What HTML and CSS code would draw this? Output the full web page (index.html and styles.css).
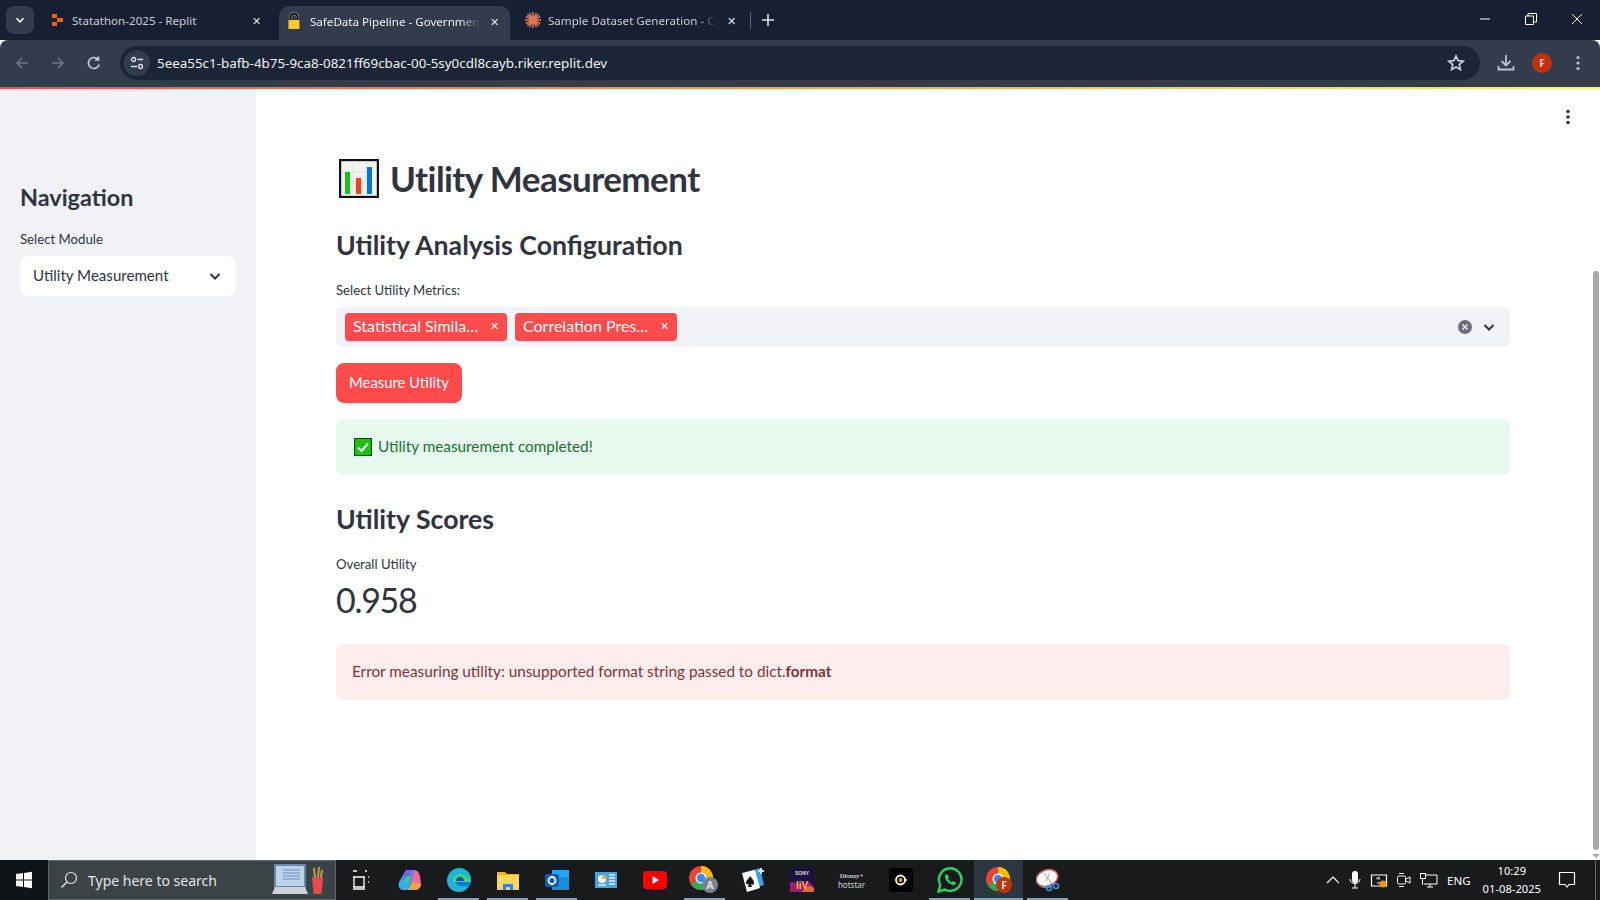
FILE: index.html
```html
<!DOCTYPE html>
<html lang="en">
<head>
<meta charset="utf-8">
<title>SafeData Pipeline</title>
<link rel="stylesheet" href="styles.css">
</head>
<body>
<div class="screen">
  <header class="tabstrip">
    <button class="tab-search"><svg width="12" height="12" viewBox="0 0 12 12"><path d="M2.5 4.2 6 7.8l3.5-3.6" fill="none" stroke="#fff" stroke-width="1.6"/></svg></button>
    <div class="tab first">
      <svg class="fav" width="14" height="14" viewBox="0 0 14 14"><path d="M1 1h5v4H1zM6 5h6v4H6zM1 9h5v4H1z" fill="#f26207"/></svg>
      <span class="tab-title">Statathon-2025 - Replit</span>
      <span class="tab-x">✕</span>
    </div>
    <div class="tab active">
      <svg class="fav" width="14" height="18" viewBox="0 0 14 18"><path d="M3.500 8V5a3.500 3.500 0 0 1 7 0v3" fill="none" stroke="#aab" stroke-width="2.800"/><path d="M3.500 8V5a3.500 3.500 0 0 1 7 0v3" fill="none" stroke="#000" stroke-width="1.800"/><rect x="1" y="7.500" width="12" height="10" rx="1" fill="#fcc934" stroke="#222" stroke-width=".8"/></svg>
      <span class="tab-title fade">SafeData Pipeline - Government</span>
      <span class="tab-x">✕</span>
    </div>
    <div class="tab third">
      <svg class="fav" width="16" height="16" viewBox="0 0 16 16"><g stroke="#d97757" stroke-width="1.5"><path d="M8 0v16M0 8h16M2.3 2.3l11.4 11.4M13.7 2.3 2.3 13.7M4.5 .8l7 14.4M11.5 .8l-7 14.4M.8 4.5l14.4 7M15.2 4.5.8 11.5"/></g></svg>
      <span class="tab-title fade">Sample Dataset Generation - Cl</span>
      <span class="tab-x">✕</span>
    </div>
    <span class="tab-sep"></span>
    <svg class="newtab" width="12" height="12" viewBox="0 0 12 12"><path d="M6 0v12M0 6h12" stroke="#dfe3ea" stroke-width="1.6"/></svg>
    <div class="winbtns">
      <svg width="12" height="12" viewBox="0 0 12 12"><path d="M1 6h10" stroke="#fff"/></svg>
      <svg width="12" height="12" viewBox="0 0 12 12"><path d="M.5 3h8v8.500h-8zM3 3V.5h8.500V9H8.500" fill="none" stroke="#fff"/></svg>
      <svg width="12" height="12" viewBox="0 0 12 12"><path d="M1 1l10 10M11 1 1 11" stroke="#fff"/></svg>
    </div>
  </header>

  <nav class="toolbar">
    <svg class="navicon" width="16" height="16" viewBox="0 0 16 16"><path d="M14 8H3M8 3 3 8l5 5" fill="none" stroke="#6e7787" stroke-width="1.6"/></svg>
    <svg class="navicon" width="16" height="16" viewBox="0 0 16 16"><path d="M2 8h11M8 3l5 5-5 5" fill="none" stroke="#6e7787" stroke-width="1.6"/></svg>
    <svg class="navicon" width="16" height="16" viewBox="0 0 16 16"><path d="M13.200 9.500A5.500 5.500 0 1 1 12 4.300M12.500 1.500v3.500H9" fill="none" stroke="#c8ced8" stroke-width="1.6"/></svg>
    <div class="omnibox">
      <span class="site-btn"><svg width="14" height="14" viewBox="0 0 14 14"><g fill="none" stroke="#dfe3ea" stroke-width="1.300"><circle cx="3.500" cy="3.500" r="2"/><path d="M7.500 3.500H13M1 10.500h6"/><circle cx="10.500" cy="10.500" r="2"/></g></svg></span>
      <span class="url">5eea55c1-bafb-4b75-9ca8-0821ff69cbac-00-5sy0cdl8cayb.riker.replit.dev</span>
      <svg width="18" height="18" viewBox="0 0 18 18"><path d="m9 2 2.100 4.700 5 .5-3.800 3.300 1.100 5L9 13l-4.400 2.500 1.100-5L1.900 7.200l5-.5z" fill="none" stroke="#c8ced8" stroke-width="1.700"/></svg>
    </div>
    <div class="toolicons">
      <svg width="18" height="18" viewBox="0 0 18 18"><path d="M9 1v10M4.500 7 9 11.500 13.500 7M1.500 12v3.500h15V12" fill="none" stroke="#b9c3d6" stroke-width="1.800"/></svg>
      <span class="avatar">F</span>
      <svg width="18" height="18" viewBox="0 0 18 18"><g fill="#b9c3d6"><circle cx="9" cy="3.500" r="1.600"/><circle cx="9" cy="9" r="1.600"/><circle cx="9" cy="14.500" r="1.600"/></g></svg>
    </div>
  </nav>
  <div class="loadbar"></div>

  <div class="app">
    <aside class="sidebar">
      <h2 class="side-title">Navigation</h2>
      <div class="field-label">Select Module</div>
      <div class="select">
        <span class="lift">Utility Measurement</span>
        <svg width="14" height="14" viewBox="0 0 14 14"><path d="m2.500 5 4.500 4.500L11.500 5" fill="none" stroke="#31333f" stroke-width="2"/></svg>
      </div>
    </aside>

    <main class="main">
      <svg class="page-menu" width="6" height="16" viewBox="0 0 6 16"><g fill="#31333f"><circle cx="3" cy="2.500" r="1.800"/><circle cx="3" cy="8" r="1.800"/><circle cx="3" cy="13.500" r="1.800"/></g></svg>
      <h1 class="title">
        <svg class="chart-emoji" width="40" height="39" viewBox="0 0 40 39"><rect x="1" y="1" width="38" height="37" fill="#f3f3f3" stroke="#111" stroke-width="2.400"/><path d="M2 13h36M2 25h36M14 2v35M27 2v35" stroke="#e2e2e2"/><rect x="6" y="13" width="5" height="22" fill="#16c60c"/><rect x="17" y="19" width="5" height="16" fill="#f7410f"/><rect x="28" y="8" width="5" height="27" fill="#0078d7"/></svg>
        <span>Utility Measurement</span>
      </h1>
      <h2 class="section first-section">Utility Analysis Configuration</h2>
      <div class="field-label">Select Utility Metrics:</div>
      <div class="multiselect">
        <span class="tag"><span class="tag-text">Statistical Simila…</span><span class="tag-x">✕</span></span>
        <span class="tag"><span class="tag-text">Correlation Pres…</span><span class="tag-x">✕</span></span>
        <span class="ms-spacer"></span>
        <svg width="14" height="14" viewBox="0 0 14 14"><circle cx="7" cy="7" r="7" fill="#6b6f7c"/><path d="m4.500 4.500 5 5m0-5-5 5" stroke="#f0f2f6" stroke-width="1.400"/></svg>
        <svg class="ms-chevron" width="14" height="14" viewBox="0 0 14 14"><path d="m2.500 5 4.500 4.500L11.500 5" fill="none" stroke="#31333f" stroke-width="2"/></svg>
      </div>
      <button class="primary">Measure Utility</button>
      <div class="alert success">
        <svg class="check-emoji" width="18" height="18" viewBox="0 0 18 18"><rect x=".5" y=".5" width="17" height="17" fill="#16c60c" stroke="#1a3a1a"/><path d="m4 9.500 3.500 3.500L14 5.500" fill="none" stroke="#fff" stroke-width="2"/></svg>
        <span class="lift">Utility measurement completed!</span>
      </div>
      <h2 class="section">Utility Scores</h2>
      <div class="field-label metric-label">Overall Utility</div>
      <div class="metric-value">0.958</div>
      <div class="alert error"><span class="lift">Error measuring utility: unsupported format string passed to dict.<strong>format</strong></span></div>
    </main>

    <div class="scrollbar">
      <span class="sb-thumb"></span>
      <span class="sb-arrow"></span>
    </div>
  </div>

  <footer class="taskbar">
    <span class="tb-start"><svg width="18" height="18" viewBox="0 0 18 18"><path d="M1 3l7-1v6.500H1zM9 1.900 17 .8v7.700H9zM1 9.500h7V16l-7-1zM9 9.500h8v7.700l-8-1.100z" fill="#fff"/></svg></span>
    <div class="tb-search">
      <svg width="18" height="18" viewBox="0 0 18 18"><circle cx="11" cy="7" r="5.500" fill="none" stroke="#e6e6e6" stroke-width="1.200"/><path d="M7 11 1.500 16.500" stroke="#e6e6e6" stroke-width="1.400"/></svg>
      <span class="tb-search-text">Type here to search</span>
      <svg class="tb-art" width="52" height="34" viewBox="0 0 52 34"><path d="M3 2h30v22H3z" fill="#bcd3ea" stroke="#6c87a8" stroke-width="2"/><path d="M11 7h17M11 10h17M11 13h17M11 16h17" stroke="#6a8fc0"/><path d="M3 24h30l3 7H0z" fill="#ccd3dc"/><path d="M40 14h11l-1.500 17h-8z" fill="#e8494a"/><path d="M43 14l-1-9M46 14l1-10M49 14l1-7" stroke="#c4a040" stroke-width="2"/></svg>
    </div>
    <div class="tb-apps">
      <span class="tb-app"><svg width="20" height="20" viewBox="0 0 20 20"><path d="M2 1h4M14 1h2M2 7h12M2 17h12M3 7v10M13 7v10M2 19h12M17 7h1M17 12h1" fill="none" stroke="#fff" stroke-width="1.300"/></svg></span>
      <span class="tb-app"><svg width="24" height="24" viewBox="0 0 24 24"><path d="M8 2h8l-5 20H5C1 22 0 18 1 14z" fill="#2fb0e8"/><path d="M8 2h6l-3 11H4z" fill="#7c5cf0"/><path d="M16 2c3 0 5 2 6 6l1 8c0 3-2 6-6 6h-6z" fill="#f06aa0"/><path d="M10 22h7c3 0 5-2 6-6l-9-2z" fill="#f3a33a"/><path d="M4 14 9 8h4l-3 6z" fill="#3ccf80"/></svg></span>
      <span class="tb-app line"><svg width="24" height="24" viewBox="0 0 24 24"><circle cx="12" cy="12" r="12" fill="#0c7fc4"/><path d="M0 12C1 5 7 0 12 0c7 0 12 5 12 11v3H9c0 4 7 6 13 3-2 4-6 7-10 7-7 0-12-5-12-12z" fill="#1fb3d8"/><path d="M6 14c0-6 4-8 8-8 5 0 9 4 10 8z" fill="#46cf7f"/><path d="M9 13c0-3 2-4 4-4s4 1 4 4z" fill="#0c5c9c"/></svg></span>
      <span class="tb-app line"><svg width="22" height="20" viewBox="0 0 22 20"><path d="M0 2h8l2 2h12v16H0z" fill="#f0b429"/><path d="M0 5h22v15H0z" fill="#fcd55f"/><path d="M6 20v-6h10v6h-3v-3H9v3z" fill="#2e86de"/></svg></span>
      <span class="tb-app line"><svg width="24" height="24" viewBox="0 0 24 24"><path d="M7 2h17v20H7z" fill="#1490df"/><path d="M7 2h17v7H7z" fill="#28a8ea"/><rect x="0" y="6" width="14" height="13" rx="2" fill="#0a5fb0"/><circle cx="7" cy="12.500" r="3.500" fill="none" stroke="#fff" stroke-width="1.800"/></svg></span>
      <span class="tb-app"><svg width="22" height="16" viewBox="0 0 22 16"><rect width="22" height="16" fill="#4aa3df"/><circle cx="7" cy="7" r="4" fill="#fff"/><path d="M7 7V3a4 4 0 0 1 4 4z" fill="#f2a93b"/><path d="M14 3h6M14 6h6M14 9h6M14 12h6M3 13h8" stroke="#e0f0fb" stroke-width="1.300"/></svg></span>
      <span class="tb-app"><svg width="24" height="18" viewBox="0 0 24 18"><rect width="24" height="18" rx="4" fill="#f00"/><path d="M9.500 5v8l6.500-4z" fill="#fff"/></svg></span>
      <span class="tb-app line"><svg width="30" height="28" viewBox="0 0 30 28"><circle cx="12" cy="12" r="12" fill="#ea4335"/><path d="M12 12 1.600 18a12 12 0 0 0 14.400 5.300z" fill="#34a853"/><path d="M12 0a12 12 0 0 1 10.400 18L12 12z" fill="#fbbc04"/><circle cx="12" cy="12" r="5.500" fill="#fff"/><circle cx="12" cy="12" r="4.200" fill="#4285f4"/><circle cx="21" cy="19" r="8" fill="#76848f"/><text x="21" y="23" class="badge-letter">A</text></svg></span>
      <span class="tb-app"><svg width="24" height="26" viewBox="0 0 24 26"><path d="M5 5 19 1l4 17-14 4z" fill="#3aa0e8"/><path d="M1 6l13-3 5 18-13 4z" fill="#fff"/><path d="M9 9c2 3 4 4 4 7 0 2-2 2-3 1l1 3H7l1-3c-1 1-3 0-3-1 0-3 3-4 4-7z" fill="#111"/><path d="M20 1v6M17 4h6" stroke="#cfe8ff" stroke-width="2"/></svg></span>
      <span class="tb-app"><svg width="24" height="24" viewBox="0 0 24 24"><rect width="24" height="24" fill="#1a1140"/><path d="M0 24V14c6 0 12 2 16 0 3-1 6 2 8 6v4z" fill="#a01a70"/><path d="M12 24c3-6 8-8 12-4v4z" fill="#f06030"/><text x="12" y="7" class="sony">SONY</text><text x="12" y="21" class="liv">liV</text></svg></span>
      <span class="tb-app"><span class="hotstar"><span class="hs-top">Disney+</span><span class="hs-bot">hotstar</span></span></span>
      <span class="tb-app"><svg width="24" height="24" viewBox="0 0 24 24"><rect width="24" height="24" rx="3" fill="#000"/><circle cx="11.500" cy="12" r="4.500" fill="none" stroke="#fff" stroke-width="1.800"/><circle cx="11.500" cy="12" r="2" fill="#f0a030"/><circle cx="17" cy="12" r="1" fill="#fff"/></svg></span>
      <span class="tb-app line"><svg width="26" height="26" viewBox="0 0 26 26"><path d="M1.500 24.500 3.300 18A11.300 11.300 0 1 1 8 22.600z" fill="none" stroke="#25d366" stroke-width="2.400"/><path d="M9 7.500c-1.500 1-1.500 3 0 5.500s4 4.500 6.500 5c2 .3 3.500-1 3.500-2.500l-3-1.500-1.300 1.300c-1.500-.5-3-2-3.700-3.700L12 10 10.500 7.500z" fill="#25d366"/></svg></span>
      <span class="tb-app current line"><svg width="26" height="26" viewBox="0 0 26 26"><circle cx="12" cy="12" r="12" fill="#ea4335"/><path d="M12 12 1.600 18a12 12 0 0 0 14.400 5.300z" fill="#34a853"/><path d="M12 0a12 12 0 0 1 10.400 18L12 12z" fill="#fbbc04"/><circle cx="12" cy="12" r="5.500" fill="#fff"/><circle cx="12" cy="12" r="4.200" fill="#4285f4"/><circle cx="18" cy="18" r="8" fill="#b8360e"/><text x="18" y="22" class="badge-letter">F</text></svg></span>
      <span class="tb-app line"><svg width="24" height="24" viewBox="0 0 24 24"><ellipse cx="11" cy="10" rx="11" ry="8" transform="rotate(-20 11 10)" fill="#fff" stroke="#d65a5a" stroke-width="1.500"/><path d="M2 16c4 4 10 3 14-1l-1 4c-4 2-10 2-13-3z" fill="#888"/><path d="M8 5l8 11M14 5l-4 8" stroke="#8aa" /><circle cx="13" cy="20" r="2.500" fill="none" stroke="#2e9be8" stroke-width="1.500"/><circle cx="20" cy="18" r="2.500" fill="none" stroke="#2e9be8" stroke-width="1.500"/></svg></span>
    </div>
    <div class="tray">
      <svg width="14" height="8" viewBox="0 0 14 8"><path d="m1 7 6-6 6 6" fill="none" stroke="#fff" stroke-width="1.200"/></svg>
      <svg width="12" height="18" viewBox="0 0 12 18"><rect x="3" y="0" width="6" height="12" rx="3" fill="#fff"/><path d="M1 8c0 6 10 6 10 0M6 13v4M3 17h6" fill="none" stroke="#fff"/></svg>
      <svg width="18" height="16" viewBox="0 0 18 16"><path d="M1.500 3h15v11h-15z" fill="none" stroke="#fff" stroke-width="1.200"/><path d="M6 7l3-2v3M10 11l-3 0" stroke="#fff" fill="none"/><circle cx="13" cy="12" r="3.500" fill="#f7930a"/></svg>
      <svg width="14" height="16" viewBox="0 0 14 16"><rect x=".5" y="4" width="8" height="8" rx="1.500" fill="none" stroke="#fff"/><path d="M9 7l4-2v6l-4-2M2 1.500h5M2 14.500h5" fill="none" stroke="#fff"/></svg>
      <svg width="18" height="15" viewBox="0 0 18 15"><path d="M5 2h12v9H4M10 11v3M7 14h6" fill="none" stroke="#fff"/><rect x=".5" y=".5" width="5" height="5" fill="#1a1a1a" stroke="#fff"/><path d="M2.500 6v6" stroke="#fff"/></svg>
      <span class="tray-lang">ENG</span>
      <span class="clock"><span>10:29</span><span>01-08-2025</span></span>
      <svg class="tray-notif" width="18" height="18" viewBox="0 0 18 18"><path d="M1.500 1.500h15v12H11l-2 2.500-2-2.500H1.500z" fill="none" stroke="#fff" stroke-width="1.200"/></svg>
      <span class="show-desktop"></span>
    </div>
  </footer>
</div>
</body>
</html>
```

FILE: styles.css
```css
* { box-sizing: border-box; }
html, body { margin: 0; padding: 0; height: 100%; overflow: hidden; }
body { font-family: "Lato", "Noto Sans", sans-serif; color: #31333f; background: #fff; }
svg { display: block; flex: none; }
button { font: inherit; border: 0; padding: 0; }
.lift { padding-bottom: 2px; }

.screen { width: 1600px; height: 900px; display: flex; flex-direction: column; }

/* browser tabs */
.tabstrip { height: 40px; flex: none; background: #172032; display: flex; align-items: flex-end; padding-left: 6px; }
.tab-search { width: 28px; height: 28px; margin-bottom: 6px; border-radius: 8px; background: #333c4d; display: flex; align-items: center; justify-content: center; }
.tab { height: 34px; width: 231px; display: flex; align-items: center; padding: 0 10px 6px 16px; font-family: "Noto Sans", sans-serif; font-size: 11.600px; color: #c8ced8; }
.tab.first { width: 245px; padding-left: 17px; padding-right: 15px; }
.tab.first .fav { margin-right: 7px; }
.tab.active { background: #333c4d; border-radius: 10px 10px 0 0; color: #eef1f6; width: 231px; padding-left: 8px; padding-right: 8px; padding-bottom: 4px; }
.tab.third { width: 240px; padding-left: 15px; padding-right: 11px; }
.tab .fav { margin-right: 9px; }
.tab.third .fav { margin-right: 7px; }
.tab-title { flex: 1; min-width: 0; overflow: hidden; white-space: nowrap; }
.fade { -webkit-mask-image: linear-gradient(90deg, #000 88%, transparent); mask-image: linear-gradient(90deg, #000 88%, transparent); }
.tab-x { width: 16px; font-size: 11px; text-align: center; color: #dfe3ea; margin-left: 6px; }
.tab-sep { width: 1px; height: 17px; background: #5a6373; margin: 0 0 11px 0; }
.newtab { margin: 0 0 14px 11px; }
.winbtns { margin-left: auto; align-self: flex-start; display: flex; gap: 34px; padding: 13px 17px 0 0; }

/* toolbar */
.toolbar { height: 47px; flex: none; background: #333c4d; display: flex; align-items: center; padding: 0 14px 1px 14px; border-radius: 8px 8px 0 0; gap: 20px; }
.omnibox { flex: none; width: 1360px; margin-left: -2px; height: 34px; background: #1c2535; border-radius: 17px; display: flex; align-items: center; padding: 0 15px 0 4px; }
.site-btn { width: 26px; height: 26px; border-radius: 50%; background: #333c4d; display: flex; align-items: center; justify-content: center; }
.url { flex: 1; margin-left: 7px; font-family: "Noto Sans", sans-serif; font-size: 13.400px; color: #eef1f6; white-space: nowrap; }
.toolicons { display: flex; align-items: center; margin-left: -3px; gap: 17px; }
.avatar { width: 20px; height: 20px; border-radius: 50%; background: #bd330e; color: #f4d9cf; font: 700 10px/20px "Noto Sans", sans-serif; text-align: center; }
.loadbar { height: 2px; flex: none; background: linear-gradient(90deg, #ff4b4b, #ffa04b 50%, #fff46b); }

/* page */
.app { flex: 1; min-height: 0; display: flex; }
.sidebar { width: 256px; flex: none; background: #f0f2f6; padding: 92px 20px 0; }
.side-title { margin: 0 0 16px; font-size: 23.400px; line-height: 32px; font-weight: 700; }
.field-label { font-size: 13.200px; line-height: 20px; margin-bottom: 7px; }
.select { height: 40px; background: #fff; border-radius: 8px; padding: 0 14px 0 13px; display: flex; align-items: center; justify-content: space-between; font-size: 15.100px; }

.main { position: relative; flex: 1; min-width: 0; padding: 0 82px 0 80px; }
.page-menu { position: absolute; right: 21px; top: 20px; }
.title { margin: 67px 0 0; height: 44px; display: flex; align-items: center; gap: 11px; padding-left: 3px; font-size: 35px; line-height: 44px; font-weight: 700; letter-spacing: -.55px; }
.section { margin: 26px 0 0; font-size: 26.700px; line-height: 36px; font-weight: 700; }
.first-section { margin: 27px 0 17px; }
.multiselect { height: 40px; background: #f0f2f6; border-radius: 8px; display: flex; align-items: center; gap: 8px; padding: 0 14px 0 9px; }
.tag { width: 162px; height: 28px; background: #ff4b4b; border-radius: 4px; color: #fff; display: flex; align-items: center; padding: 0 6px 3px 8px; font-size: 16px; white-space: nowrap; }
.tag-text { flex: 1; overflow: hidden; }
.tag-x { font-size: 11px; width: 14px; text-align: center; }
.ms-spacer { flex: 1; }
.ms-chevron { margin-left: 2px; }
.primary { display: block; margin-top: 16px; width: 126px; height: 40px; padding-bottom: 2px; border-radius: 8px; background: #ff4b4b; color: #fff; font-size: 14.800px; text-align: center; }
.alert { height: 56px; margin-top: 16px; border-radius: 8px; padding: 0 16px; display: flex; align-items: center; font-size: 15.300px; }
.success { background: #e7f8ee; color: #177233; padding-left: 18px; gap: 6px; }
.error { background: #ffeced; color: #7d353b; margin-top: 0; }
.error strong { font-weight: 700; }
.section + .metric-label { margin-top: 17px; margin-bottom: 0; }
.metric-value { font-size: 34px; line-height: 52px; margin-bottom: 18px; letter-spacing: -1.300px; }

.scrollbar { width: 8px; flex: none; display: flex; flex-direction: column; align-items: center; padding: 182px 0 2px; }
.sb-thumb { flex: 1; width: 6px; background: #a8a8a8; border-radius: 3px; }
.sb-arrow { margin-top: 4px; width: 0; height: 0; border: 4px solid transparent; border-top: 4px solid #a8a8a8; border-bottom: 0; }

/* taskbar */
.taskbar { height: 40px; flex: none; background: #191a1c; display: flex; align-items: stretch; color: #fff; font-family: "Noto Sans", sans-serif; }
.tb-start { width: 48px; display: flex; align-items: center; justify-content: center; background: #0f1418; }
.tb-search { width: 288px; background: #3b4347; border: 1px solid #5f666a; display: flex; align-items: center; padding-left: 11px; font-size: 14px; color: #e6e6e6; }
.tb-search-text { margin-left: 10px; flex: 1; white-space: nowrap; }
.tb-art { margin-right: 11px; }
.tb-apps { display: flex; margin-left: 0; }
.tb-app { position: relative; width: 49.100px; display: flex; align-items: center; justify-content: center; }
.tb-app.line::after { content: ""; position: absolute; left: 4px; right: 4px; bottom: 0; height: 2px; background: #7fa3bb; }
.tb-app.current { background: #2a3640; }
.tb-app.current::after { left: 0; right: 0; }
.badge-letter { font: 700 10px "Noto Sans", sans-serif; fill: #f2e2dc; text-anchor: middle; }
.sony { font: 700 5px "Liberation Sans", sans-serif; fill: #ddd; text-anchor: middle; }
.liv { font: 700 10px "Liberation Sans", sans-serif; fill: #f5b942; text-anchor: middle; }
.hotstar { display: flex; flex-direction: column; align-items: center; line-height: 9px; color: #cfd3da; }
.hs-top { font: italic 700 7px/8px "Liberation Serif", serif; }
.hs-bot { font-size: 8px; line-height: 9px; }
.tray { margin-left: auto; display: flex; align-items: center; gap: 9px; font-size: 11.500px; }
.clock { display: flex; flex-direction: column; align-items: center; line-height: 18px; margin-left: 3px; font-size: 11.200px; }
.tray-notif { margin-left: 8px; }
.show-desktop { width: 1px; align-self: stretch; background: #6a6a6a; margin-left: 10px; margin-right: 4px; }
```
